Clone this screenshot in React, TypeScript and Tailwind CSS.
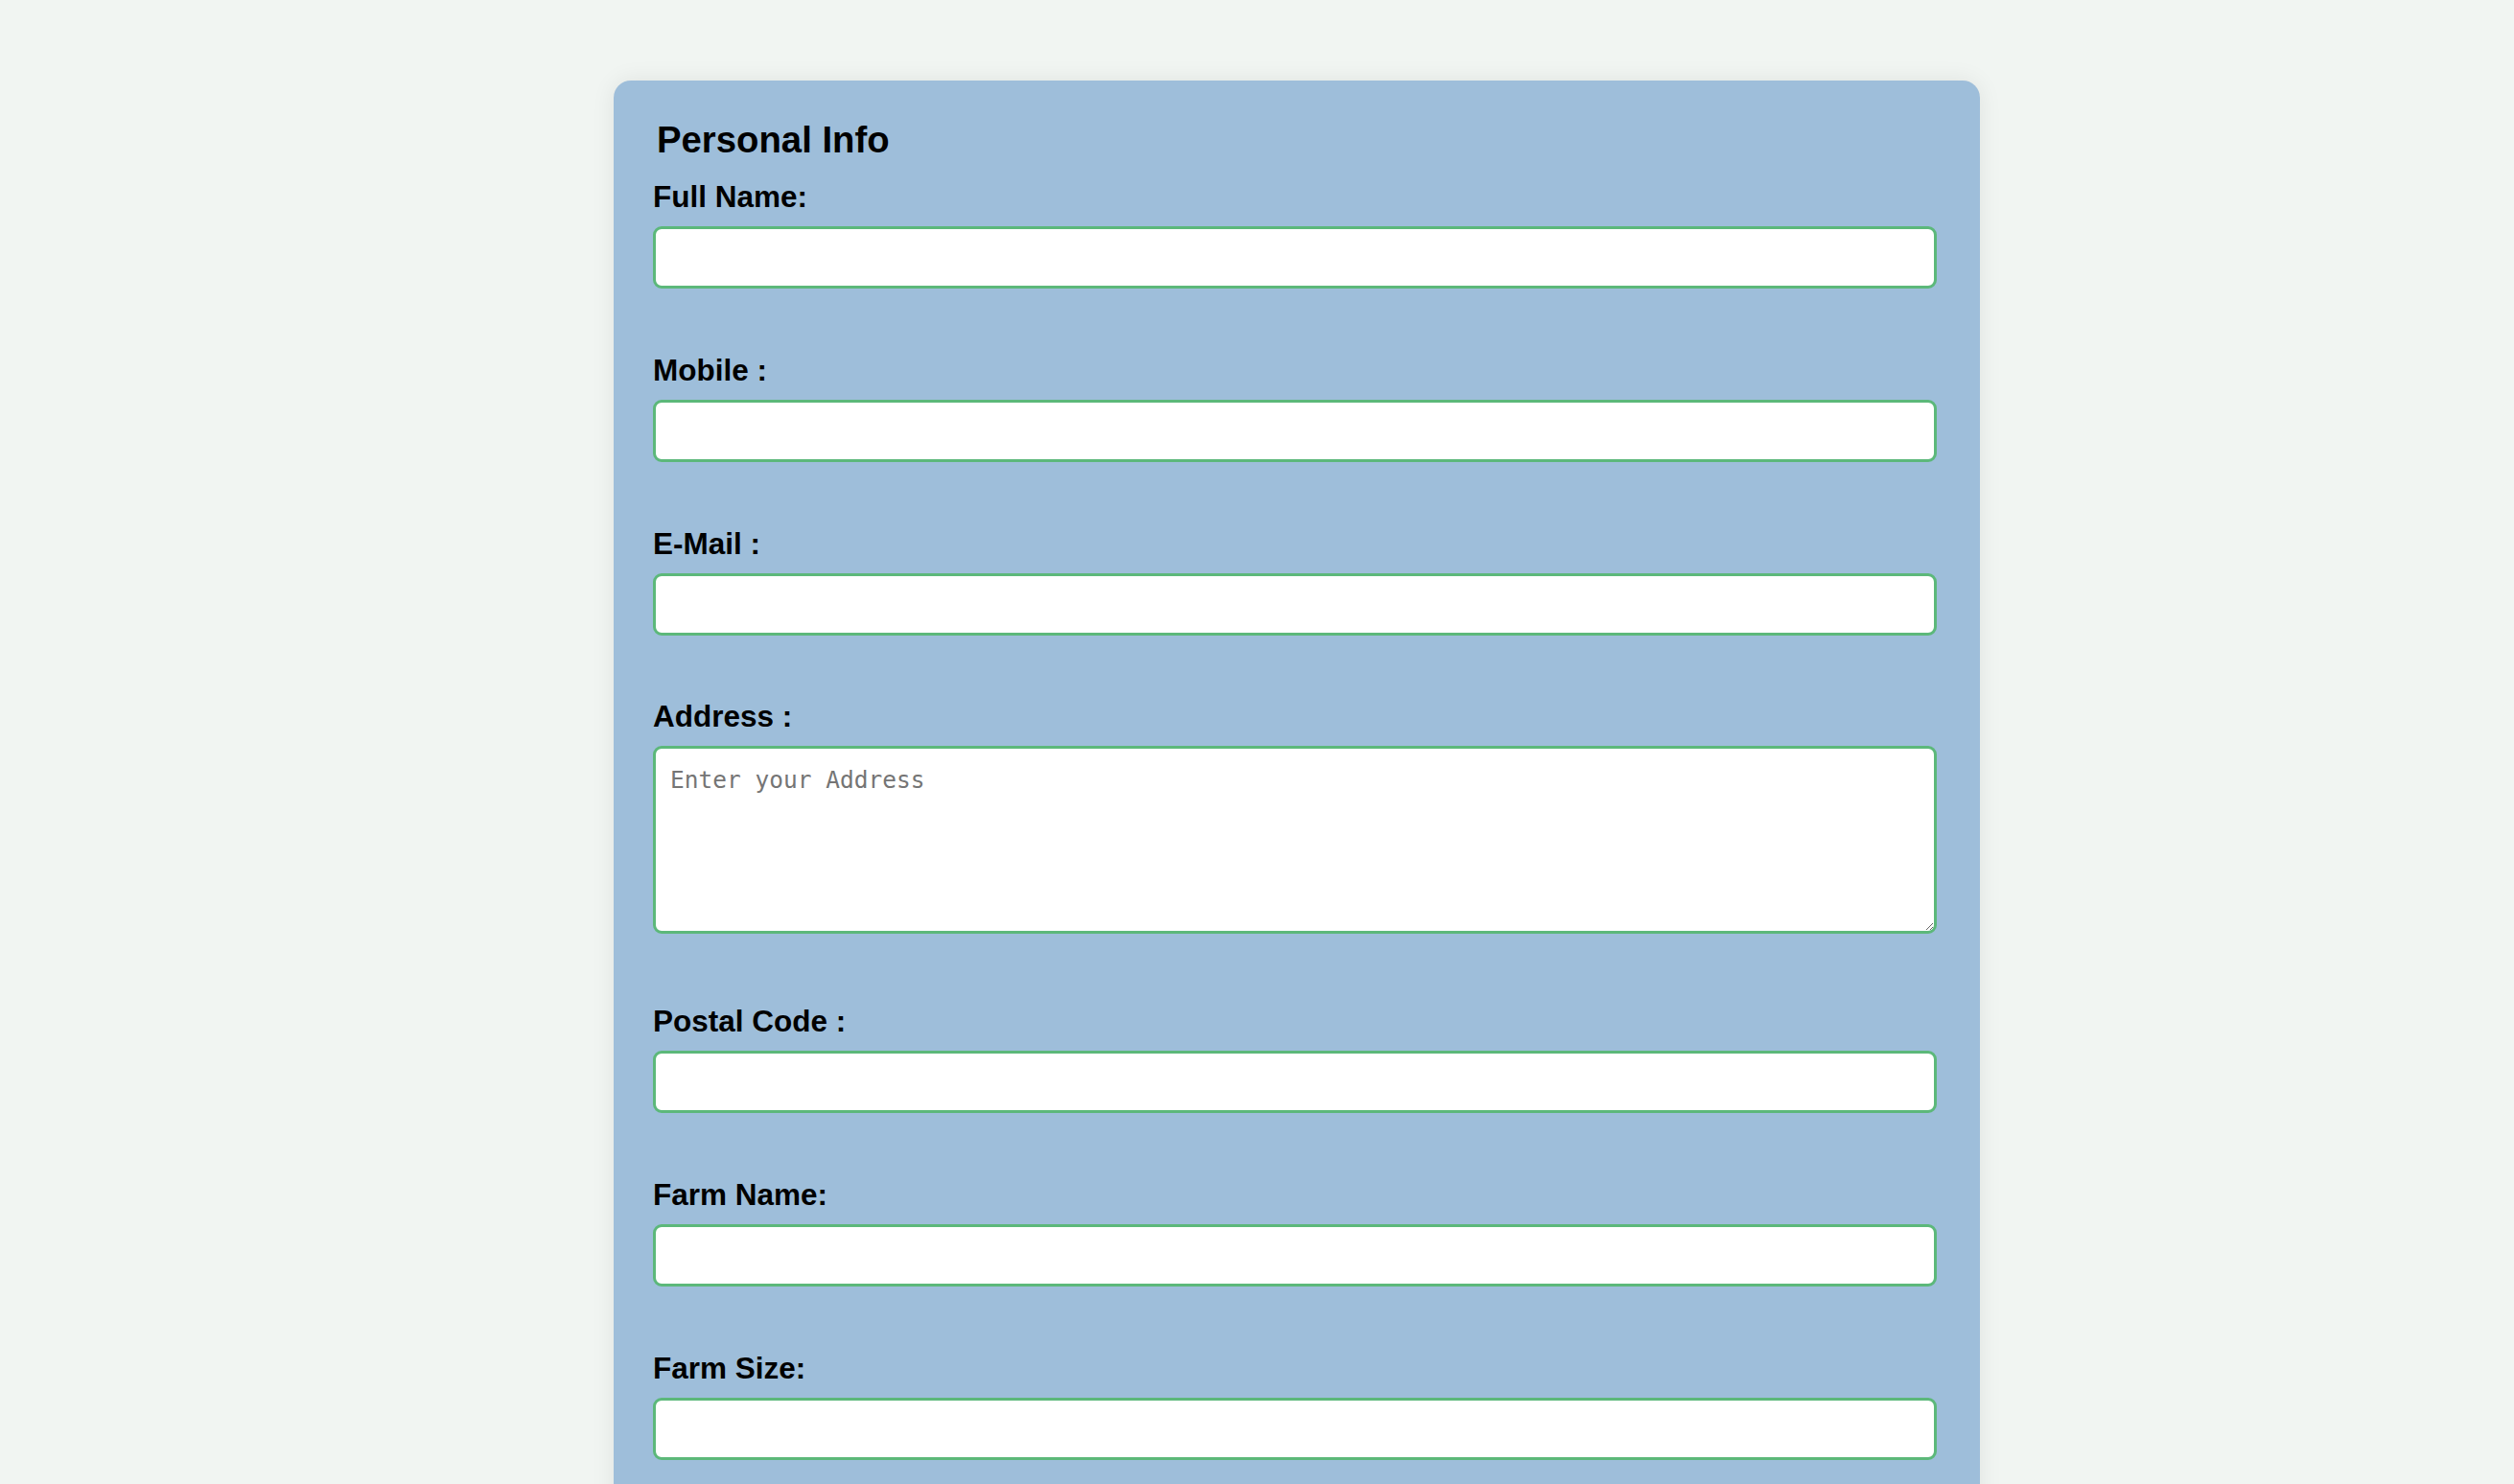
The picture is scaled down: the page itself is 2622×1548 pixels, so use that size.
const fields = [
  { label: 'Full Name:', type: 'text' },
  { label: 'Mobile :', type: 'tel' },
  { label: 'E-Mail :', type: 'email' },
]

const moreFields = [
  { label: 'Postal Code :', type: 'text' },
  { label: 'Farm Name:', type: 'text' },
  { label: 'Farm Size:', type: 'text' },
]

function Field({ label, type }: { label: string; type: string }) {
  return (
    <div className="mb-[68.8px]">
      <label className="block text-[31.5px] leading-[33.5px] font-bold text-black">{label}</label>
      <input
        type={type}
        className="mt-[13.5px] block h-[65px] w-[1339px] rounded-[9px] border-[3px] border-[#5cb87a] bg-white px-[14px] text-[24px] outline-none"
      />
    </div>
  )
}

export default function App() {
  return (
    <div className="min-h-screen bg-[#f1f5f2] pt-[84px]" style={{ fontFamily: '"Liberation Sans", Arial, sans-serif' }}>
      <div className="ml-[640px] w-[1425px] rounded-[18px] bg-[#9ebeda] pt-[41px] pb-[60px] pl-[41px] pr-[45px] shadow-[0_0_24px_rgba(0,0,0,0.08)]">
        <h2 className="ml-[4px] mb-[22px] text-[38.3px] leading-[42px] font-bold text-black">Personal Info</h2>

        {fields.map((f) => (
          <Field key={f.label} label={f.label} type={f.type} />
        ))}

        <div className="mb-[75px]">
          <label className="block text-[31.5px] leading-[33.5px] font-bold text-black">Address :</label>
          <textarea
            placeholder="Enter your Address"
            className="mt-[13.5px] block h-[196px] w-[1339px] rounded-[9px] border-[3px] border-[#5cb87a] bg-white px-[15px] pt-[18px] pb-[10px] text-[24.5px] leading-[30px] outline-none placeholder:text-[#757575]"
            style={{ fontFamily: '"DejaVu Sans Mono", "Liberation Mono", monospace' }}
          />
        </div>

        {moreFields.map((f) => (
          <Field key={f.label} label={f.label} type={f.type} />
        ))}
      </div>
    </div>
  )
}
